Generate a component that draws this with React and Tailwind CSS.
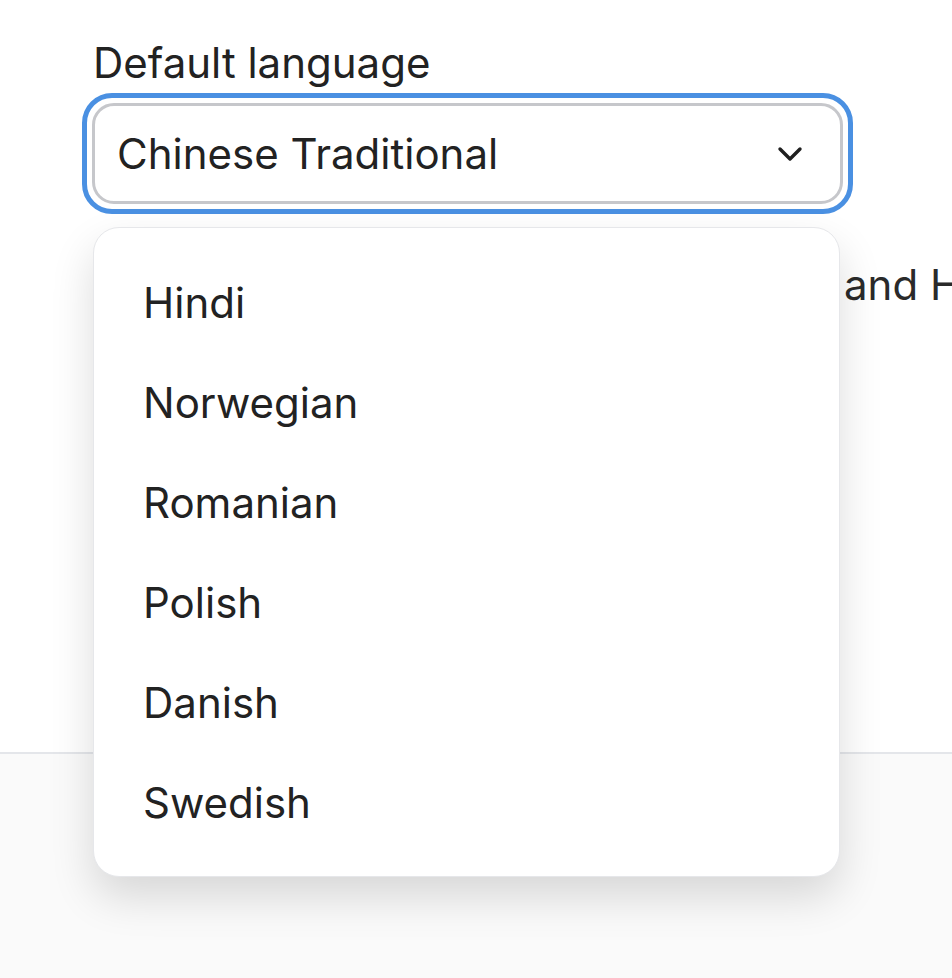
import React from 'react';

const languages = ['Hindi', 'Norwegian', 'Romanian', 'Polish', 'Danish', 'Swedish'];

function Chevron() {
  return (
    <svg width="26" height="18" viewBox="0 0 26 18" fill="none" className="text-[#1f1f1f]">
      <path d="M3 4l10 10L23 4" stroke="currentColor" strokeWidth="3.4" strokeLinecap="round" strokeLinejoin="round" />
    </svg>
  );
}

export default function App() {
  return (
    <div className="relative w-[952px] h-[978px] overflow-hidden bg-white text-[#222] font-['Inter',sans-serif]">
      <div className="h-[752px] pl-[82px] pt-[38px]">
        <label className="block pl-[11px] text-[42px] leading-[50px]">Default language</label>

        {/* select with focus ring */}
        <div className="mt-[5px] w-[771px] h-[121px] rounded-[30px] border-[5px] border-[#4a90e2] p-[5px]">
          <button className="flex h-full w-full items-center justify-between rounded-[22px] border-[3px] border-[#c6c7cb] bg-white pl-[22px] pr-[37px]">
            <span className="text-[42px] leading-none">Chinese Traditional</span>
            <Chevron />
          </button>
        </div>

        <p className="mt-[46px] pl-[11px] whitespace-nowrap text-[42px] leading-[50px] text-[#2a2a2a]">
          <span className="inline-block w-[751px] overflow-hidden align-top">Used for emails, invoices</span>
          and Help Center articles
        </p>
      </div>

      <div className="h-[226px] border-t-2 border-[#e4e6ea] bg-[#fafafa]" />

      {/* dropdown menu */}
      <ul className="absolute left-[93px] top-[227px] w-[747px] rounded-[26px] border border-[#e6e7ea] bg-white py-[24px] shadow-[0_20px_44px_rgba(0,0,0,0.14)]">
        {languages.map((lang) => (
          <li key={lang} className="flex h-[100px] items-center pl-[49px] text-[42px] text-[#222]">
            {lang}
          </li>
        ))}
      </ul>
    </div>
  );
}
